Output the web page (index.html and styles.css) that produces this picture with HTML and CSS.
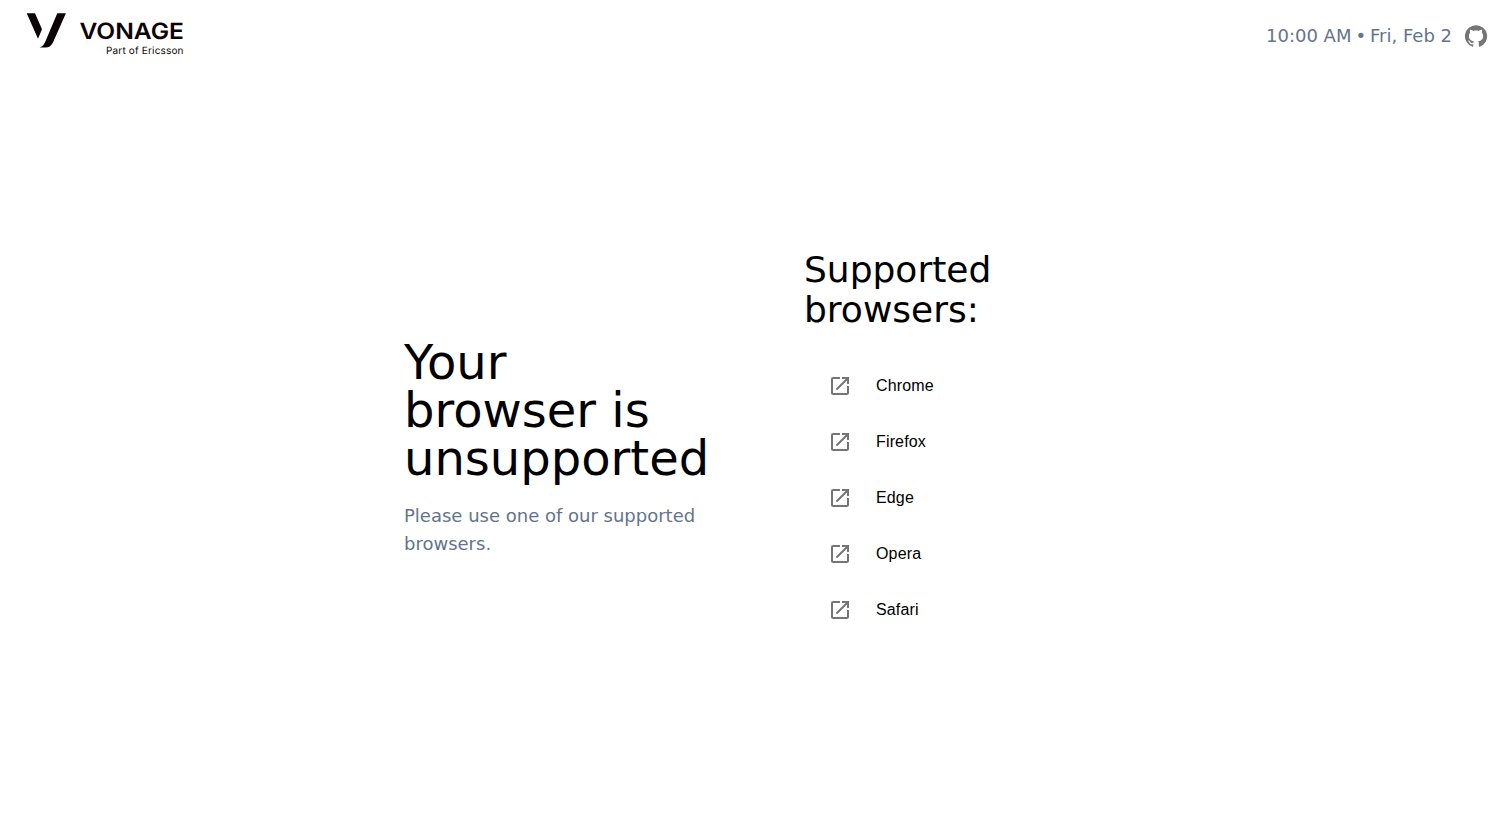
FILE: index.html
```html
<!DOCTYPE html>
<html lang="en">
<head>
<meta charset="utf-8">
<title>Unsupported browser</title>
<link rel="stylesheet" href="styles.css">
</head>
<body>
<svg class="sprite" aria-hidden="true">
  <symbol id="open" viewBox="0 0 24 24"><path d="M19 19H5V5h7V3H5c-1.11 0-2 .9-2 2v14c0 1.1.89 2 2 2h14c1.1 0 2-.9 2-2v-7h-2v7zM14 3v2h3.59l-9.83 9.83 1.41 1.41L19 6.41V10h2V3h-7z"/></symbol>
</svg>
<header class="banner">
  <svg class="logo" viewBox="0 0 200 72" role="img" aria-label="Vonage, part of Ericsson">
    <path d="M26.7 13.2H35L42 29.2 38 38.8ZM57.3 13.2H65.9L53.4 41.6C51.2 46.6 48.8 47.6 44.6 47.6H39.6C43 46.6 44.6 43.4 46 40Z"/>
    <text class="logo-name" x="79.4" y="38.5" textLength="104.6" lengthAdjust="spacingAndGlyphs">VONAGE</text>
    <text class="logo-tag" x="106" y="54.2" textLength="77.5" lengthAdjust="spacing">Part of Ericsson</text>
  </svg>
  <div class="status">
    <span>10:00 AM</span><span class="dot">•</span><span>Fri, Feb 2</span>
    <svg class="icon github" viewBox="0 0 24 24"><path d="M12 1.27a11 11 0 00-3.48 21.46c.55.09.73-.28.73-.55v-1.84c-3.03.64-3.67-1.46-3.67-1.46-.55-1.29-1.28-1.65-1.28-1.65-.92-.65.1-.65.1-.65 1.1 0 1.73 1.1 1.73 1.1.92 1.65 2.57 1.2 3.21.92a2 2 0 01.64-1.47c-2.47-.27-5.04-1.19-5.04-5.5 0-1.1.46-2.1 1.2-2.84a3.76 3.76 0 010-2.93s.91-.28 3.11 1.1c1.8-.49 3.7-.49 5.5 0 2.1-1.38 3.02-1.1 3.02-1.1a3.76 3.76 0 01.1 2.93c.73.74 1.19 1.74 1.19 2.84 0 4.32-2.58 5.23-5.04 5.5.45.37.82.92.82 2.02v3.03c0 .27.1.64.73.55A11 11 0 0012 1.27"/></svg>
  </div>
</header>
<main class="content">
  <section class="column">
    <h1>Your<br>browser is<br>unsupported</h1>
    <p>Please use one of our supported browsers.</p>
  </section>
  <section class="column">
    <h2>Supported<br>browsers:</h2>
    <ul class="browsers">
      <li><svg class="icon"><use href="#open"/></svg><span>Chrome</span></li>
      <li><svg class="icon"><use href="#open"/></svg><span>Firefox</span></li>
      <li><svg class="icon"><use href="#open"/></svg><span>Edge</span></li>
      <li><svg class="icon"><use href="#open"/></svg><span>Opera</span></li>
      <li><svg class="icon"><use href="#open"/></svg><span>Safari</span></li>
    </ul>
  </section>
</main>
</body>
</html>
```
FILE: styles.css
```css
* { box-sizing: border-box; margin: 0; padding: 0; }
body {
  min-height: 100vh;
  display: flex;
  flex-direction: column;
  background: #fff;
  color: #000;
  font-family: "DejaVu Sans", sans-serif;
}
.sprite { display: none; }
.banner {
  height: 72px;
  display: flex;
  justify-content: space-between;
  align-items: center;
  padding-right: 24px;
}
.logo { width: 200px; height: 72px; fill: #0d0408; }
.logo-name { font: 600 22.4px Inter, sans-serif; text-rendering: geometricPrecision; }
.logo-tag { font: 400 10px Inter, sans-serif; text-rendering: geometricPrecision; }
.status {
  display: flex;
  align-items: center;
  color: #64748b;
  font-size: 18px;
  line-height: 28px;
}
.dot { margin: 0 4px; }
.icon { width: 24px; height: 24px; flex: none; fill: #757575; }
.github { margin-left: 12px; }
.content {
  flex: 1;
  display: flex;
  justify-content: center;
  align-items: center;
}
.column { width: 400px; padding: 0 48px; }
h1 { font-size: 48px; line-height: 48px; font-weight: 400; margin-bottom: 20px; }
h2 { font-size: 36px; line-height: 40px; font-weight: 400; margin-bottom: 20px; }
p { color: #64748b; font-size: 18px; line-height: 28px; }
.browsers {
  list-style: none;
  padding: 8px 0;
  font-family: "Liberation Sans", sans-serif;
  font-size: 16px;
  line-height: 24px;
  letter-spacing: 0.15px;
}
.browsers li {
  height: 56px;
  display: flex;
  align-items: center;
  gap: 24px;
  padding-left: 24px;
}
```
